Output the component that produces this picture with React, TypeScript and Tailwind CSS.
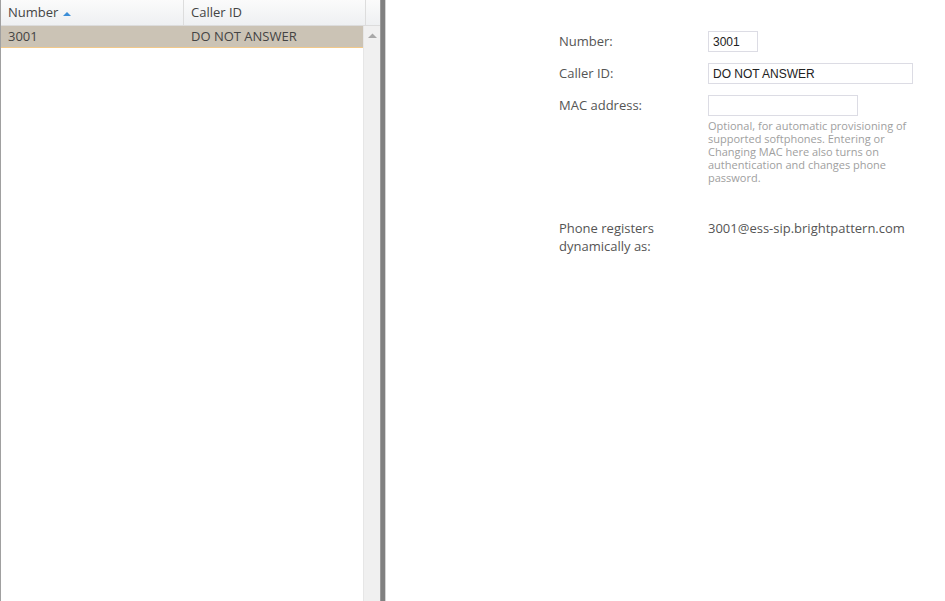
import React from "react";

export default function App() {
  return (
    <div
      className="flex w-[945px] h-[601px] bg-white overflow-hidden text-[#444]"
      style={{ fontFamily: '"Open Sans", "Noto Sans", sans-serif' }}
    >
      {/* Left list panel */}
      <div className="flex flex-col w-[380px] h-full border-l border-[#a0a0a0] bg-white">
        <div className="flex h-[26px] border-b border-[#dcdcdc] bg-gradient-to-b from-[#fbfbfb] to-[#eef0f2]">
          <div className="w-[183px] border-r border-[#dddddd] pl-[7px] flex items-center text-[13px] text-[#444]">
            Number
            <svg width="8" height="5" viewBox="0 0 8 5" className="ml-[5px] mt-[1px]">
              <path d="M0 5 L4 1 L8 5 Z" fill="#3b8ed8" />
            </svg>
          </div>
          <div className="w-[182px] border-r border-[#dddddd] pl-[7px] flex items-center text-[13px] text-[#444]">
            Caller ID
          </div>
          <div className="flex-1" />
        </div>
        <div className="flex flex-1">
          <div className="flex-1">
            <div className="flex h-[22px] bg-[#cbc3b5] border-b border-[#f2c98a] text-[13px] text-[#444]">
              <div className="w-[183px] pl-[7px] flex items-center">3001</div>
              <div className="flex-1 pl-[7px] flex items-center">DO NOT ANSWER</div>
            </div>
          </div>
          <div className="w-[17px] bg-[#f0f0f0] border-l border-[#e6e6e6] flex justify-center pt-[7px]">
            <svg width="9" height="5" viewBox="0 0 9 5">
              <path d="M0 5 L4.5 0.5 L9 5 Z" fill="#a8a8a8" />
            </svg>
          </div>
        </div>
      </div>

      {/* Splitter */}
      <div className="w-[6px] h-full bg-[#808080] border-l border-[#9a9a9a] border-r border-r-[#d4d4d4]" />

      {/* Right form */}
      <div className="flex-1 h-full bg-white pl-[173px] pt-[31px] text-[13px] text-[#555]">
        <div className="flex items-center h-[21px]">
          <div className="w-[149px]">Number:</div>
          <div className="w-[50px] h-[21px] border border-[#dcdce4] flex items-center px-[4px] text-[12px] text-[#222]" style={{ fontFamily: '"Liberation Sans", Arial, sans-serif' }}>
            3001
          </div>
        </div>
        <div className="flex items-center h-[21px] mt-[11px]">
          <div className="w-[149px]">Caller ID:</div>
          <div className="w-[205px] h-[21px] border border-[#dcdce4] flex items-center px-[4px] text-[12px] text-[#222]" style={{ fontFamily: '"Liberation Sans", Arial, sans-serif' }}>
            DO NOT ANSWER
          </div>
        </div>
        <div className="flex items-start mt-[11px]">
          <div className="w-[149px] h-[21px] flex items-center">MAC address:</div>
          <div className="flex flex-col">
            <div className="w-[150px] h-[21px] border border-[#dcdce4]" />
            <div className="w-[210px] mt-[3px] text-[11px] leading-[13px] text-[#a0a0a0]">
              Optional, for automatic provisioning of supported softphones. Entering or Changing MAC here also turns on authentication and changes phone password.
            </div>
          </div>
        </div>
        <div className="flex items-start mt-[35px] leading-[18px]">
          <div className="w-[149px]">
            Phone registers
            <br />
            dynamically as:
          </div>
          <div>3001@ess-sip.brightpattern.com</div>
        </div>
      </div>
    </div>
  );
}
